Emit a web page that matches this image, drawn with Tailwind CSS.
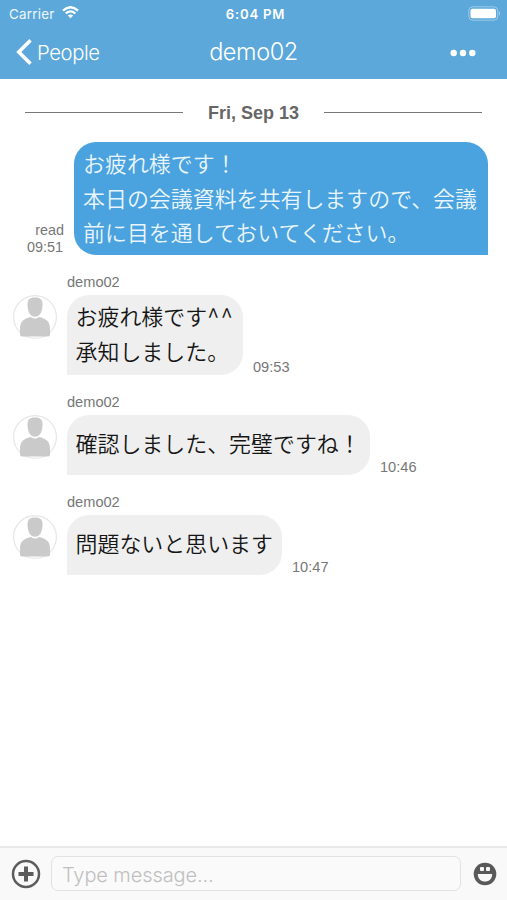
<!DOCTYPE html>
<html lang="ja">
<head>
<meta charset="utf-8">
<title>Chat</title>
<script src="https://cdn.jsdelivr.net/npm/@tailwindcss/browser@4"></script>
</head>
<body class="w-[507px] h-[900px] overflow-hidden bg-white flex flex-col font-['Inter','Noto_Sans_CJK_JP',sans-serif]">
<svg class="hidden">
  <symbol id="person" viewBox="0 0 44 44">
    <circle cx="22" cy="22" r="21.4" fill="#fff" stroke="#e6e6e6" stroke-width="1.2"/>
    <path d="M22 2.500C27.800 2.500 29.800 5 29.500 10.500C29.200 15.500 28 18.500 25.500 20.800Q22 22.700 18.500 20.800C16 18.500 14.800 15.500 14.500 10.500C14.200 5 16.200 2.500 22 2.500Z" fill="#cacaca"/>
    <path d="M7 39.500V34c0-6.500 2.500-10 11-12Q22 25 26 22C34.500 24 37 27.500 37 34v5.500q0 2-2 2H9q-2 0-2-2Z" fill="#cacaca"/>
  </symbol>
</svg>
<header class="h-[79px] shrink-0 bg-[#5ca8da] text-white">
  <div class="h-[27px] grid grid-cols-[1fr_auto_1fr] items-center pl-[9px] pr-[6px]">
    <div class="flex items-center gap-[7px]">
      <span class="text-[13.400px] leading-[26px] pt-px tracking-[0.250px] text-white/90">Carrier</span>
      <svg class="w-[17px] h-[13px] mb-[2px]" viewBox="0 0 17 13" fill="none" stroke="#fff" stroke-width="2.300"><path d="M1 4.600Q8.500-2.200 16 4.600M3.700 7.500Q8.500 3.300 13.300 7.500"/><path d="M5.800 9.500Q8.500 7.300 11.200 9.500L8.500 12.300Z" fill="#fff" stroke="none"/></svg>
    </div>
    <span class="text-[13.200px] font-semibold tracking-[0.750px] leading-[26px] pt-px ml-px">6:04 PM</span>
    <svg class="justify-self-end w-[33px] h-[15px] mb-px" viewBox="0 0 33 15"><rect x=".8" y=".8" width="29" height="13.400" rx="4" fill="none" stroke="#fff" stroke-opacity=".4"/><rect x="2.500" y="2.700" width="25.500" height="9.600" rx="2" fill="#fff"/><path d="M31 5.300q2 2.200 0 4.400Z" fill="#fff" fill-opacity=".5"/></svg>
  </div>
  <div class="h-[51px] grid grid-cols-[1fr_auto_1fr] items-center pl-[16px] pr-[31px]">
    <div class="flex items-center gap-[5px]">
      <svg class="w-[16px] h-[26px] mb-px" viewBox="0 0 16 26" fill="none" stroke="#fff" stroke-width="3.600"><path d="M14.500 1.300 2.800 13 14.500 24.700"/></svg>
      <span class="text-[20.300px] leading-[50px] tracking-[-0.400px] font-[350]">People</span>
    </div>
    <h1 class="text-[23.500px] leading-[49px] pb-[2px] tracking-[-0.400px] font-[350] ml-[15px]">demo02</h1>
    <svg class="justify-self-end w-[26px] h-[8px]" viewBox="0 0 26 8" fill="#fff"><circle cx="3.700" cy="4" r="3.200"/><circle cx="13" cy="4" r="3.200"/><circle cx="22.300" cy="4" r="3.200"/></svg>
  </div>
</header>
<main class="flex-1">
  <div class="flex items-center pt-[22px] pl-[25px] pr-[25px] h-[46px]">
    <div class="flex-1 h-px bg-[#777] mb-[2px]"></div>
    <span class="w-[141px] text-center text-[18px] leading-[22px] font-bold text-[#666] font-['Liberation_Sans',sans-serif]">Fri, Sep 13</span>
    <div class="flex-1 h-px bg-[#777] mb-[2px]"></div>
  </div>
  <section class="flex justify-end items-end gap-[10px] mt-[17px] pr-[19px]">
    <div class="text-right text-[14.400px] leading-[17px] text-[#777] font-['Liberation_Sans',sans-serif] -mb-px"><p>read</p><p class="pr-px">09:51</p></div>
    <div class="w-[414px] h-[113px] bg-[#4aa2de] text-[#e9f5fd] rounded-[22px] rounded-br-none pl-[9px] pt-[4px] text-[21.950px] leading-[34.700px] font-['Noto_Sans_CJK_JP',sans-serif] font-[350] whitespace-nowrap">お疲れ様です！<br>本日の会議資料を共有しますので、会議<br>前に目を通しておいてください。</div>
  </section>
  <section class="grid grid-cols-[54px_auto_1fr] pl-[13px] mt-[19px]">
    <p class="col-start-2 col-span-2 h-[21px] text-[14.600px] leading-[17px] text-[#777] font-['Liberation_Sans',sans-serif]">demo02</p>
    <svg class="w-[44px] h-[44px] col-start-1"><use href="#person"/></svg>
    <div class="w-[176px] h-[80px] bg-[#efefef] text-[#151515] rounded-[22px] rounded-bl-none pl-[8.500px] pt-[3px] text-[21.950px] leading-[35px] font-['Noto_Sans_CJK_JP',sans-serif] font-[350] whitespace-nowrap">お疲れ様です<span class="tracking-[1.500px]">^^</span><br>承知しました。</div>
    <time class="self-end pl-[10px] text-[14.600px] leading-[16px] text-[#777] font-['Liberation_Sans',sans-serif]">09:53</time>
  </section>
  <section class="grid grid-cols-[54px_auto_1fr] pl-[13px] mt-[19px]">
    <p class="col-start-2 col-span-2 h-[21px] text-[14.600px] leading-[17px] text-[#777] font-['Liberation_Sans',sans-serif]">demo02</p>
    <svg class="w-[44px] h-[44px] col-start-1"><use href="#person"/></svg>
    <div class="w-[303px] h-[60px] bg-[#efefef] text-[#151515] rounded-[22px] rounded-bl-none pl-[8.500px] text-[21.950px] leading-[56px] font-['Noto_Sans_CJK_JP',sans-serif] font-[350] whitespace-nowrap">確認しました、完璧ですね！</div>
    <time class="self-end pl-[10px] text-[14.600px] leading-[16px] text-[#777] font-['Liberation_Sans',sans-serif]">10:46</time>
  </section>
  <section class="grid grid-cols-[54px_auto_1fr] pl-[13px] mt-[19px]">
    <p class="col-start-2 col-span-2 h-[21px] text-[14.600px] leading-[17px] text-[#777] font-['Liberation_Sans',sans-serif]">demo02</p>
    <svg class="w-[44px] h-[44px] col-start-1"><use href="#person"/></svg>
    <div class="w-[215px] h-[60px] bg-[#efefef] text-[#151515] rounded-[22px] rounded-bl-none pl-[8.500px] text-[21.950px] leading-[56px] font-['Noto_Sans_CJK_JP',sans-serif] font-[350] whitespace-nowrap">問題ないと思います</div>
    <time class="self-end pl-[10px] text-[14.600px] leading-[16px] text-[#777] font-['Liberation_Sans',sans-serif]">10:47</time>
  </section>
</main>
<footer class="h-[54px] shrink-0 bg-[#f9f9f9] border-t-2 border-[#e9e9e9] flex items-center pl-[11px] pr-[10px]">
  <svg class="w-[30px] h-[30px]" viewBox="0 0 30 30" fill="none" stroke="#5c5c5c"><circle cx="15" cy="15" r="13" stroke-width="2.500"/><path d="M15 7.500v15M7.500 15h15" stroke-width="4"/></svg>
  <div class="ml-[10px] mb-[2px] w-[410px] h-[35px] rounded-[7px] border border-[#e2e2e2] bg-[#fafafa] px-[10px] text-[20px] leading-[36px] tracking-[-0.100px] font-[350] text-[#c0c0c0]">Type message...</div>
  <svg class="ml-auto w-[24px] h-[24px]" viewBox="0 0 24 24"><circle cx="12" cy="12" r="11.300" fill="#595959"/><g fill="#f9f9f9"><rect x="7" y="5" width="4" height="4" rx="1"/><rect x="13" y="5" width="4" height="4" rx="1"/><path d="M4.800 12h14.400c0 4.800-3 7.600-7.200 7.600S4.800 16.800 4.800 12Z"/></g></svg>
</footer>
</body>
</html>
